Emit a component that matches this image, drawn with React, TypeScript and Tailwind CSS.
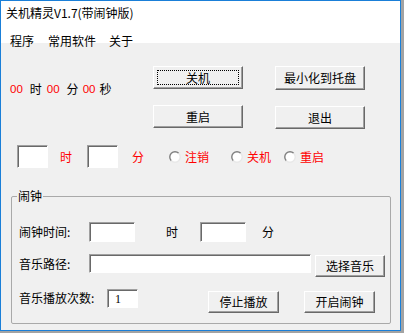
import type { ReactNode } from 'react';

const cjk = "font-['Noto_Sans_CJK_SC','Microsoft_YaHei',sans-serif]";

function Button({ label, w, h, focus, className = '' }: { label: string; w: string; h: string; focus?: boolean; className?: string }) {
  return (
    <div
      className={`${w} ${h} ${className} relative flex items-center justify-center bg-[#f0f0f0] border border-t-white border-l-white border-r-[#696969] border-b-[#696969] shadow-[inset_-1px_-1px_0_#a0a0a0] text-black`}
    >
      {focus && <div className="absolute inset-[3px] border border-dotted border-black" />}
      <span className="leading-[14px]">{label}</span>
    </div>
  );
}

function Input({ w, h, value, className = '' }: { w: string; h: string; value?: string; className?: string }) {
  return (
    <div
      className={`${w} ${h} ${className} flex items-center bg-white border border-t-[#a0a0a0] border-l-[#a0a0a0] border-b-white border-r-white shadow-[inset_1px_1px_0_#696969]`}
    >
      {value && <span className="pl-[7px] font-['Liberation_Serif',serif] text-[12px] leading-[14px]">{value}</span>}
    </div>
  );
}

function Radio({ label, className = '' }: { label: string; className?: string }) {
  return (
    <div className={`flex items-center ${className}`}>
      <svg width="12" height="12" viewBox="0 0 12 12">
        <circle cx="6" cy="6" r="5" fill="#fff" />
        <path d="M2.3 9.7 A5.2 5.2 0 0 1 9.7 2.3" stroke="#808080" strokeWidth="1.4" fill="none" />
        <path d="M9.7 2.3 A5.2 5.2 0 0 1 2.3 9.7" stroke="#e8e8e8" strokeWidth="1.4" fill="none" />
      </svg>
      <span className="ml-[4px] text-[#ff0000] leading-[14px]">{label}</span>
    </div>
  );
}

function Red({ children, className = '' }: { children: ReactNode; className?: string }) {
  return <span className={`text-[#ff0000] ${className}`}>{children}</span>;
}

export default function App() {
  return (
    <div className={`w-[404px] h-[333px] bg-[#a3a3a3] ${cjk} text-[12px] text-black`}>
      <div className="w-[401px] h-[331px] border border-[#1a7fd8] flex flex-col bg-[#f0f0f0]">
        {/* Title + menu */}
        <div className="h-[42px] bg-white flex flex-col">
          <div className="pl-[5px] pt-[5px] leading-[14px]">关机精灵V1.7(带闹钟版)</div>
          <div className="flex pl-[9px] pt-[14px] leading-[14px]">
            <span>程序</span>
            <span className="ml-[14px]">常用软件</span>
            <span className="ml-[13px]">关于</span>
          </div>
        </div>

        {/* Top buttons */}
        <div className="flex items-start pt-[23px]">
          <div className="w-[152px] pl-[9px] pt-[16px] flex items-center leading-[14px]">
            <Red className="font-['Liberation_Sans',sans-serif] text-[11.5px]">00</Red>
            <span className="ml-[7px]">时</span>
            <Red className="ml-[5px] font-['Liberation_Sans',sans-serif] text-[11.5px]">00</Red>
            <span className="ml-[7px]">分</span>
            <Red className="ml-[4px] font-['Liberation_Sans',sans-serif] text-[11.5px]">00</Red>
            <span className="ml-[4px]">秒</span>
          </div>
          <div className="flex flex-col gap-[16px]">
            <Button label="关机" w="w-[90px]" h="h-[23px]" focus />
            <Button label="重启" w="w-[90px]" h="h-[23px]" />
          </div>
          <div className="flex flex-col gap-[16px] ml-[32px]">
            <Button label="最小化到托盘" w="w-[90px]" h="h-[24px]" />
            <Button label="退出" w="w-[90px]" h="h-[23px]" />
          </div>
        </div>

        {/* Countdown row */}
        <div className="flex items-center h-[23px] mt-[16px] pl-[16px] leading-[14px]">
          <Input w="w-[31px]" h="h-[23px]" />
          <Red className="ml-[12px]">时</Red>
          <Input w="w-[31px]" h="h-[23px]" className="ml-[15px]" />
          <Red className="ml-[14px]">分</Red>
          <Radio label="注销" className="ml-[25px]" />
          <Radio label="关机" className="ml-[22px]" />
          <Radio label="重启" className="ml-[13px]" />
        </div>

        {/* Alarm group */}
        <div className="relative ml-[10px] mt-[28px] w-[380px] h-[128px] border border-[#a9a9a9] rounded-[2px] pl-[7px] pt-[25px] leading-[14px]">
          <span className="absolute -top-[8px] left-[5px] bg-[#f0f0f0] px-[1px]">闹钟</span>

          <div className="flex items-center h-[20px]">
            <span className="w-[70px]">闹钟时间:</span>
            <Input w="w-[46px]" h="h-[20px]" />
            <span className="ml-[31px]">时</span>
            <Input w="w-[46px]" h="h-[20px]" className="ml-[22px]" />
            <span className="ml-[16px]">分</span>
          </div>

          <div className="flex items-start mt-[12px]">
            <span className="w-[70px] mt-[3px]">音乐路径:</span>
            <Input w="w-[222px]" h="h-[19px]" />
            <Button label="选择音乐" w="w-[70px]" h="h-[22px]" className="ml-[4px] mt-[1px]" />
          </div>

          <div className="flex items-start mt-[12px]">
            <span className="w-[88px] mt-[2px]">音乐播放次数:</span>
            <Input w="w-[31px]" h="h-[19px]" value="1" />
            <Button label="停止播放" w="w-[71px]" h="h-[22px]" className="ml-[70px] mt-[2px]" />
            <Button label="开启闹钟" w="w-[71px]" h="h-[22px]" className="ml-[25px] mt-[2px]" />
          </div>
        </div>
      </div>
    </div>
  );
}
